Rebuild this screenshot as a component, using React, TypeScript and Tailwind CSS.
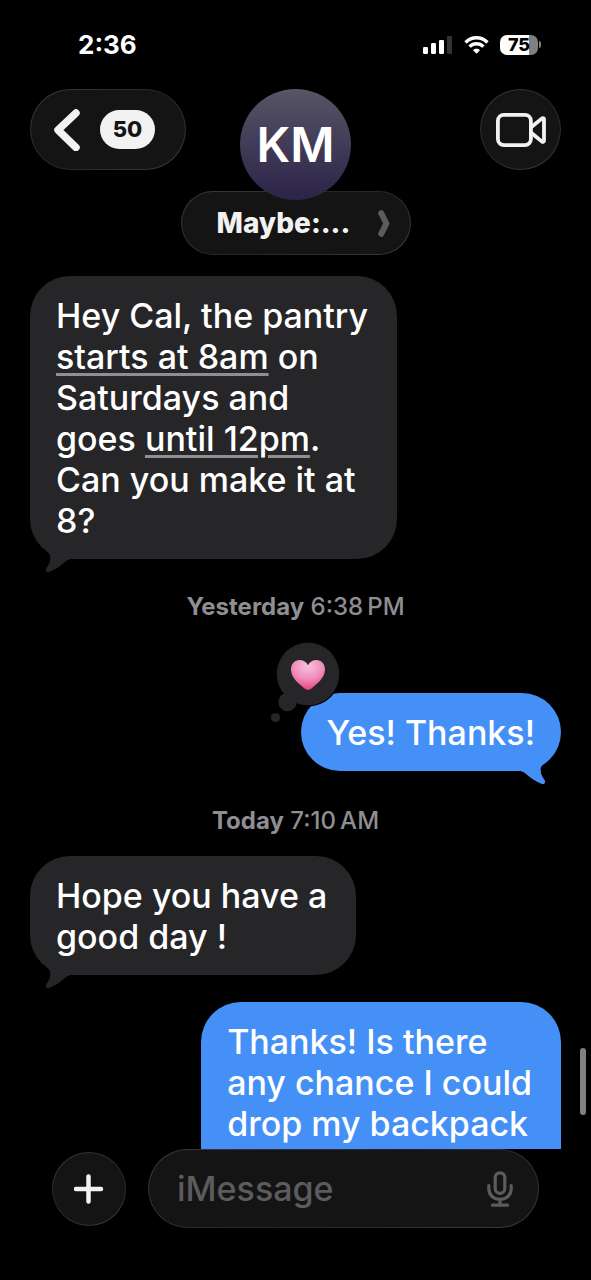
import type { ReactNode } from "react";

const glass =
  "border border-transparent [background:linear-gradient(#141414,#141414)_padding-box,linear-gradient(150deg,#3c3c3c,#242424_50%,#3c3c3c)_border-box]";

function StatusBar() {
  return (
    <div className="flex h-[89px] shrink-0 items-center justify-between pl-[78px] pr-[50px] text-white">
      <span className="text-[26px] font-bold leading-8">2:36</span>
      <div className="flex items-center gap-[11px]">
        <svg className="h-5 w-[30px]" viewBox="0 0 30 20" fill="currentColor" aria-label="Signal">
          <rect x="0" y="12" width="5" height="7" rx="1.3" />
          <rect x="8" y="8" width="5" height="11" rx="1.3" />
          <rect x="16" y="5" width="5" height="14" rx="1.3" />
          <rect x="24" y="1" width="5" height="18" rx="1.3" fill="#333333" />
        </svg>
        <svg className="h-5 w-[25px]" viewBox="0 0 26 20" fill="none" stroke="currentColor" strokeWidth="3.6" aria-label="Wi-Fi">
          <path d="M1.6 7.4C8 .9 18 .9 24.4 7.4" />
          <path d="M5.8 11.7c4.1-4.1 10.3-4.1 14.4 0" />
          <path d="M13 19.2l-3.6-3.7c2-2 5.2-2 7.2 0z" fill="currentColor" stroke="none" />
        </svg>
        <div className="flex items-center gap-px">
          <div className="flex h-5 w-[38px] items-center justify-center rounded-[7px] bg-linear-to-r from-white from-76% to-[#808080] to-76% text-[18px] font-extrabold leading-5 text-black">
            75
          </div>
          <span className="h-[7px] w-[2px] rounded-r-full bg-[#808080]" />
        </div>
      </div>
    </div>
  );
}

function Header() {
  return (
    <div className="flex shrink-0 items-start px-[30px] pb-[21px]">
      <div className="flex min-w-0 basis-0 grow">
        <button
          aria-label="Back, 50 unread"
          className={`flex h-[81px] w-[156px] shrink-0 items-center gap-5 rounded-full pl-[23px] ${glass}`}
        >
          <svg className="h-[42px] w-[26px]" viewBox="0 0 26 42" fill="none" stroke="#f2f2f2" strokeWidth="7.5" strokeLinecap="round" strokeLinejoin="round">
            <path d="M22 4L4 21l18 17.5" />
          </svg>
          <span className="flex h-[39px] w-[55px] items-center justify-center rounded-full bg-[#f2f2f2] text-[22px] font-extrabold text-[#141414]">
            50
          </span>
        </button>
      </div>
      <div className="flex flex-col items-center">
        <div className="z-10 flex size-[111px] items-center justify-center rounded-full bg-linear-to-b from-[#585566] to-[#2c2348] text-[48px] font-semibold text-white">
          KM
        </div>
        <button className={`-mt-[9px] flex h-16 w-[230px] items-center justify-between rounded-full pl-[35px] pr-5 ${glass}`}>
          <span className="text-[28px] font-extrabold text-[#f2f2f2]">Maybe:...</span>
          <svg className="h-[27px] w-3" viewBox="0 0 12 27" fill="none" stroke="#5c5c5c" strokeWidth="6" strokeLinecap="round" strokeLinejoin="round">
            <path d="M3.2 3.2l5.2 10.3-5.2 10.3" />
          </svg>
        </button>
      </div>
      <div className="flex min-w-0 basis-0 grow justify-end">
        <button aria-label="Video call" className={`flex size-[81px] items-center justify-center rounded-full ${glass}`}>
          <svg className="h-[34px] w-[50px]" viewBox="0 0 50 34" fill="none" stroke="#f2f2f2" strokeWidth="3.8" strokeLinejoin="round">
            <rect x="1.9" y="1.9" width="33" height="30.2" rx="6" />
            <path d="M35.2 14.2L46 5.4a1.2 1.2 0 012 1v21.2a1.2 1.2 0 01-2 1l-10.8-8.8" />
          </svg>
        </button>
      </div>
    </div>
  );
}

function Tail({ className }: { className: string }) {
  return (
    <svg className={`absolute -bottom-[14px] h-7 w-[30px] ${className}`} viewBox="0 0 30 28" fill="currentColor" aria-hidden="true">
      <path d="M1 3L3 6.4C6.5 9 7 12 5.8 17C4.8 20 2.5 22 2 24C1.6 26 3 27.6 5 27C12 24 17 20.5 21.5 16.5C24 14.5 26 14 29 14V0Z" />
    </svg>
  );
}

function Received({ children }: { children: ReactNode }) {
  return (
    <div className="relative self-start rounded-[40px] bg-[#262628] pb-[18px] pl-[26px] pr-[29px] pt-[19px] text-[#262628]">
      <Tail className="left-[14px]" />
      <p className="relative text-white">{children}</p>
    </div>
  );
}

function Sent({ children, reaction, className = "pb-[18px] pr-[26px]" }: { children: ReactNode; reaction?: ReactNode; className?: string }) {
  return (
    <div className={`relative self-end rounded-[40px] bg-[#4590f7] pl-[26px] pt-[19px] text-[#4590f7] ${className}`}>
      <Tail className="right-[14px] -scale-x-100" />
      <p className="relative text-white">{children}</p>
      {reaction}
    </div>
  );
}

function HeartReaction() {
  return (
    <svg className="absolute -left-[33px] -top-[52px] h-[84px] w-[76px]" viewBox="0 0 76 84" role="img" aria-label="Loved">
      <defs>
        <radialGradient id="heart" cx="0.5" cy="0.2" r="0.8">
          <stop offset="0" stopColor="#f7c3dc" />
          <stop offset="0.55" stopColor="#f08bbd" />
          <stop offset="1" stopColor="#e8437f" />
        </radialGradient>
      </defs>
      <circle cx="40" cy="33" r="32.5" fill="#000" />
      <circle cx="40" cy="33" r="31.3" fill="#262628" />
      <circle cx="19.5" cy="61" r="9.2" fill="#262628" />
      <circle cx="7.5" cy="76.5" r="4.6" fill="#262628" />
      <path
        fill="url(#heart)"
        d="M40 49c-1.3 0-2.8-1-5-2.8C28 40.5 23 35.5 23 28.3 23 23 26.8 19 31.5 19c3.9 0 7 2 8.5 5.2C41.5 21 44.6 19 48.5 19 53.2 19 57 23 57 28.3c0 7.2-5 12.2-12 17.9-2.2 1.8-3.7 2.8-5 2.8z"
      />
    </svg>
  );
}

function Timestamp({ day, time }: { day: string; time: string }) {
  return (
    <p className="text-center text-[24px] font-medium leading-8 text-[#8e8e93]">
      <span className="font-bold">{day}</span> {time}
    </p>
  );
}

function Detected({ children }: { children: ReactNode }) {
  return (
    <a href="#" className="underline decoration-[#8e8e93] decoration-3 underline-offset-4">
      {children}
    </a>
  );
}

export default function App() {
  return (
    <main className="flex h-screen flex-col overflow-hidden bg-black font-['Inter',sans-serif]">
      <StatusBar />
      <Header />
      <section className="relative min-h-0 grow" aria-label="Messages">
        <div className="flex h-full flex-col overflow-hidden px-[30px] text-[34px] font-medium leading-[41px] *:shrink-0">
          <Received>
            Hey Cal, the pantry
            <br />
            <Detected>starts at 8am</Detected> on
            <br />
            Saturdays and
            <br />
            goes <Detected>until 12pm</Detected>.
            <br />
            Can you make it at
            <br />
            8?
          </Received>
          <div className="mt-8 mb-[70px]">
            <Timestamp day="Yesterday" time={"6:38\u2009PM"} />
          </div>
          <Sent reaction={<HeartReaction />}>Yes! Thanks!</Sent>
          <div className="mt-[34px] mb-[19px]">
            <Timestamp day="Today" time={"7:10\u2009AM"} />
          </div>
          <Received>
            Hope you have a
            <br />
            good day !
          </Received>
          <div className="mt-[27px] flex flex-col">
            <Sent className="pb-16 pr-[29px]">
              Thanks! Is there
              <br />
              any chance I could
              <br />
              drop my backpack
            </Sent>
          </div>
        </div>
        <div className="absolute bottom-[34px] right-[5px] h-[67px] w-[6px] rounded-full bg-[#808080]" />
      </section>
      <form className="flex shrink-0 items-center gap-[22px] px-[52px] pb-[52px]">
        <button type="button" aria-label="Add attachment" className={`flex size-[74px] shrink-0 items-center justify-center rounded-full ${glass}`}>
          <svg className="size-[30px]" viewBox="0 0 30 30" fill="none" stroke="#f2f2f2" strokeWidth="4.5" strokeLinecap="round">
            <path d="M14.5 2.5v25M2 15h25" />
          </svg>
        </button>
        <div className={`flex h-[79px] min-w-0 grow items-center rounded-full pl-7 pr-[25px] ${glass}`}>
          <input
            aria-label="Message"
            placeholder="iMessage"
            className="min-w-0 grow bg-transparent text-[34px] font-medium text-white outline-none placeholder:text-[#5c5c5e]"
          />
          <button type="button" aria-label="Dictate">
            <svg className="h-9 w-[26px]" viewBox="0 0 26 36" fill="none" stroke="#5c5c5e" strokeWidth="3.2" strokeLinecap="round">
              <rect x="8.2" y="1.8" width="9.6" height="20.5" rx="4.8" />
              <path d="M1.8 14.5v3c0 6.5 4.7 10.8 11.2 10.8s11.2-4.3 11.2-10.8v-3M13 28.3v6M5.5 34.2h15" />
            </svg>
          </button>
        </div>
      </form>
    </main>
  );
}
